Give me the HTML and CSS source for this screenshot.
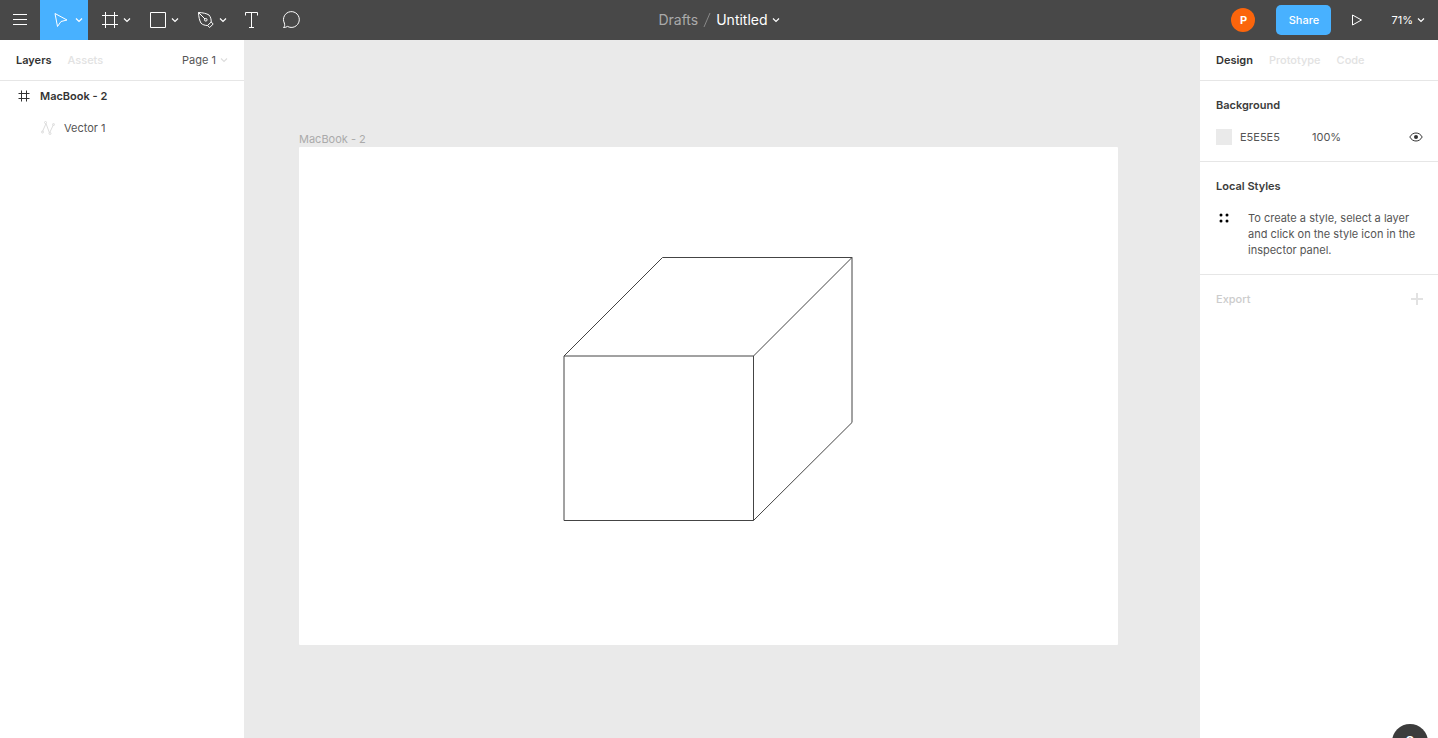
FILE: index.html
```html
<!DOCTYPE html>
<html lang="en">
<head>
    <meta charset="UTF-8">
    <meta name="viewport" content="width=device-width, initial-scale=1.0">
    <title>Untitled</title>
    <link rel="stylesheet" href="styles.css">
</head>
<body>
    <header class="topbar">
        <div class="tools">
            <button class="tool" aria-label="Menu">
                <svg width="16" height="16" viewBox="0 0 16 16"><path d="M1 2.500h14M1 7.500h14M1 12.500h14"/></svg>
            </button>
            <button class="tool wide active" aria-label="Move">
                <svg width="16" height="16" viewBox="0 0 16 16"><path d="M2 1.500l12 6.500-6 1.500-3.500 5z"/></svg>
                <svg class="chevron" width="8" height="8" viewBox="0 0 8 8"><path d="M1 2.500l3 3 3-3"/></svg>
            </button>
            <button class="tool wide" aria-label="Frame">
                <svg width="18" height="18" viewBox="0 0 18 18"><path d="M4.500 1v16M13.500 1v16M1 4.500h16M1 13.500h16"/></svg>
                <svg class="chevron" width="8" height="8" viewBox="0 0 8 8"><path d="M1 2.500l3 3 3-3"/></svg>
            </button>
            <button class="tool wide" aria-label="Rectangle">
                <svg width="18" height="18" viewBox="0 0 18 18"><path d="M1.500 1.500h15v15h-15z"/></svg>
                <svg class="chevron" width="8" height="8" viewBox="0 0 8 8"><path d="M1 2.500l3 3 3-3"/></svg>
            </button>
            <button class="tool wide" aria-label="Pen">
                <svg width="18" height="18" viewBox="0 0 18 18"><path d="M1.500 1.500C6 1.700 9.500 2.500 12 4c1.700 2 2.300 4.500 2.200 7L10.500 14.500C8 14.500 5.500 13.700 4 12.200 2.500 9.500 1.700 6 1.500 1.500zM1.500 1.500l6.500 6.500M14.200 11l2 2-3.500 3.500-2.200-2"/><circle cx="8.800" cy="8.800" r="1.300"/></svg>
                <svg class="chevron" width="8" height="8" viewBox="0 0 8 8"><path d="M1 2.500l3 3 3-3"/></svg>
            </button>
            <button class="tool" aria-label="Text">
                <svg width="18" height="18" viewBox="0 0 18 18"><path d="M2.500 4.500v-3h12v3M8.500 1.500v15M6 16.500h5"/></svg>
            </button>
            <button class="tool" aria-label="Comment">
                <svg width="20" height="20" viewBox="0 0 20 20"><path d="M1.500 17.500c1.500-1.500 1.300-2.800.8-4.500a7.900 7.900 0 1 1 3.200 3.400c-1 .7-2.300 1.100-4 1.100z"/></svg>
            </button>
        </div>
        <div class="file">
            <a class="folder" href="#drafts">Drafts</a>
            <svg width="8" height="16" viewBox="0 0 8 16"><path class="slash" d="M7 1L1 15"/></svg>
            <button class="name">Untitled
                <svg class="chevron" width="8" height="8" viewBox="0 0 8 8"><path d="M1 2.500l3 3 3-3"/></svg>
            </button>
        </div>
        <div class="actions">
            <span class="avatar">P</span>
            <button class="share">Share</button>
            <button class="play" aria-label="Present">
                <svg width="12" height="14" viewBox="0 0 12 14"><path d="M1.500 2v10l9-5z"/></svg>
            </button>
            <button class="zoom">71%
                <svg class="chevron" width="8" height="8" viewBox="0 0 8 8"><path d="M1 2.500l3 3 3-3"/></svg>
            </button>
        </div>
    </header>

    <div class="workspace">
        <aside class="panel layers">
            <div class="tabs">
                <button class="tab on">Layers</button>
                <button class="tab">Assets</button>
                <button class="page">Page 1
                    <svg class="chevron" width="8" height="8" viewBox="0 0 8 8"><path d="M1 2.500l3 3 3-3"/></svg>
                </button>
            </div>
            <ul>
                <li class="layer top">
                    <svg width="16" height="16" viewBox="0 0 16 16"><path d="M5.500 2.500v11M10.500 2.500v11M2.500 5.500h11M2.500 10.500h11"/></svg>
                    MacBook - 2
                </li>
                <li class="layer child">
                    <svg width="16" height="16" viewBox="0 0 16 16"><path d="M2.500 11.500L6 3.500M6 3.500L9.500 13M9.500 13l4-8.500"/><circle cx="2.500" cy="12" r="1"/><circle cx="5.500" cy="2.500" r="1"/><circle cx="10" cy="13.500" r="1"/><circle cx="13.500" cy="4.500" r="1"/></svg>
                    Vector 1
                </li>
            </ul>
        </aside>

        <main class="canvas">
            <div class="frame">
                <span class="frame-name">MacBook - 2</span>
                <svg class="cube" viewBox="0 0 819 498">
                    <path d="M265 209h189.500v164.500H265zM265 209l98.500-98.500H553L454.500 209M553 110.500v165l-98.500 98"/>
                </svg>
            </div>
        </main>

        <aside class="panel design">
            <div class="tabs">
                <button class="tab on">Design</button>
                <button class="tab">Prototype</button>
                <button class="tab">Code</button>
            </div>
            <section>
                <h2>Background</h2>
                <div class="fill">
                    <span class="swatch"></span>
                    <input class="hex" type="text" value="E5E5E5" aria-label="Background color">
                    <input class="opacity" type="text" value="100%" aria-label="Opacity">
                    <button class="eye" aria-label="Toggle visibility">
                        <svg width="14" height="10" viewBox="0 0 14 10"><path d="M.8 5C2.300 2.300 4.500 1 7 1s4.700 1.300 6.200 4C11.700 7.700 9.500 9 7 9S2.300 7.700.8 5z"/><circle class="dot" cx="7" cy="5" r="2"/></svg>
                    </button>
                </div>
            </section>
            <section>
                <h2>Local Styles</h2>
                <div class="hint">
                    <svg width="16" height="16" viewBox="0 0 16 16"><g class="dot"><circle cx="5" cy="5" r="1.500"/><circle cx="11" cy="5" r="1.500"/><circle cx="5" cy="11" r="1.500"/><circle cx="11" cy="11" r="1.500"/></g></svg>
                    <p>To create a style, select a layer and click on the style icon in the inspector panel.</p>
                </div>
            </section>
            <section class="export">
                <h2>Export</h2>
                <button aria-label="Add export">
                    <svg width="12" height="12" viewBox="0 0 12 12"><path d="M6 0v12M0 6h12"/></svg>
                </button>
            </section>
        </aside>
    </div>
    <button class="help" aria-label="Help">?</button>
</body>
</html>
```

FILE: styles.css
```css
*{
    box-sizing: border-box;
}
body{
    margin: 0;
    height: 100vh;
    overflow: hidden;
    display: flex;
    flex-direction: column;
    font-family: Inter, "Liberation Sans", sans-serif;
    font-size: 11px;
    line-height: 16px;
    color: #555;
}
ul,h2,p{
    list-style: none;
    margin: 0;
    padding: 0;
}
button,input{
    font: inherit;
    color: inherit;
    background: none;
    border: 0;
    margin: 0;
    padding: 0;
}
a{
    color: inherit;
    text-decoration: none;
}
svg{
    flex: none;
    fill: none;
    stroke: currentColor;
}
/* top bar */
.topbar{
    flex: none;
    height: 40px;
    display: grid;
    grid-template-columns: 1fr auto 1fr;
    background-color: #484848;
    color: #fff;
}
.tools,.file,.actions{
    display: flex;
    align-items: center;
}
.tool{
    width: 40px;
    height: 40px;
    display: flex;
    align-items: center;
    justify-content: center;
}
.wide{
    width: 48px;
    gap: 4px;
    padding-left: 7px;
}
.active{
    gap: 6px;
    background-color: #48b1ff;
}
.chevron{
    stroke-width: 1.2;
}
.file{
    gap: 5px;
    font-size: 14px;
}
.folder{
    color: #aaa;
}
.slash{
    stroke: #888;
}
.name,.zoom,.page{
    display: flex;
    align-items: center;
    gap: 4px;
}
.actions{
    justify-content: flex-end;
    padding-right: 13px;
}
.avatar{
    width: 24px;
    height: 24px;
    border-radius: 50%;
    background-color: #fb650c;
    font-weight: 700;
    line-height: 24px;
    text-align: center;
    margin-right: 21px;
}
.share{
    width: 55px;
    height: 30px;
    border-radius: 5px;
    background-color: #48b1ff;
    font-weight: 500;
}
.play{
    width: 52px;
    height: 40px;
    display: flex;
    align-items: center;
    justify-content: center;
}
.zoom{
    margin-left: 8px;
}
/* panels */
.workspace{
    flex: 1;
    display: flex;
    min-height: 0;
}
.panel{
    flex: none;
    background-color: #fff;
}
.layers{
    width: 244px;
}
.design{
    width: 238px;
}
.tabs{
    display: flex;
    align-items: center;
    gap: 16px;
    height: 41px;
    padding: 0 16px;
    border-bottom: 1px solid #e6e6e6;
}
.tab{
    font-weight: 500;
    color: #e2e2e2;
}
.on{
    font-weight: 600;
    color: #333;
}
.page{
    margin-left: auto;
}
.page .chevron{
    color: #ddd;
}
.layers ul{
    margin-top: -1px;
}
.layer{
    display: flex;
    align-items: center;
    gap: 8px;
    height: 32px;
    padding-left: 16px;
}
.top{
    font-weight: 600;
    color: #333;
}
.child{
    padding-left: 40px;
}
.child svg{
    color: #ddd;
}
section{
    padding: 8px 15px 8px 16px;
    border-bottom: 1px solid #e6e6e6;
}
h2{
    font-size: 11px;
    font-weight: 600;
    line-height: 32px;
    color: #3c3c3c;
}
.fill{
    display: flex;
    align-items: center;
    height: 32px;
}
.swatch{
    width: 16px;
    height: 16px;
    margin-right: 8px;
    background-color: #eaeaea;
}
.hex{
    width: 72px;
}
.opacity{
    width: 64px;
}
.eye{
    display: flex;
    margin-left: auto;
    color: #333;
}
.dot{
    fill: currentColor;
    stroke: none;
}
.hint{
    display: flex;
    gap: 16px;
    padding: 8px 0;
}
.hint svg{
    color: #000;
}
.export{
    display: flex;
    align-items: center;
    justify-content: space-between;
    border: 0;
}
.export h2{
    font-weight: 500;
    color: #ccc;
}
.export button{
    display: flex;
    color: #e2e2e2;
}
.export svg{
    stroke-width: 2;
}
/* canvas */
.canvas{
    flex: 1;
    position: relative;
    overflow: hidden;
    background-color: #eaeaea;
}
.frame{
    position: absolute;
    left: 55px;
    top: 107px;
    width: 819px;
    height: 498px;
    border-radius: 1px;
    background-color: #fff;
}
.frame-name{
    position: absolute;
    left: 0;
    bottom: 100%;
    color: #aaa;
}
.cube{
    display: block;
    color: #444;
}
.help{
    position: fixed;
    right: 10px;
    bottom: -22px;
    width: 36px;
    height: 36px;
    border-radius: 50%;
    background-color: #3c3c3c;
    color: #fff;
    font-size: 16px;
    font-weight: 500;
}
```
